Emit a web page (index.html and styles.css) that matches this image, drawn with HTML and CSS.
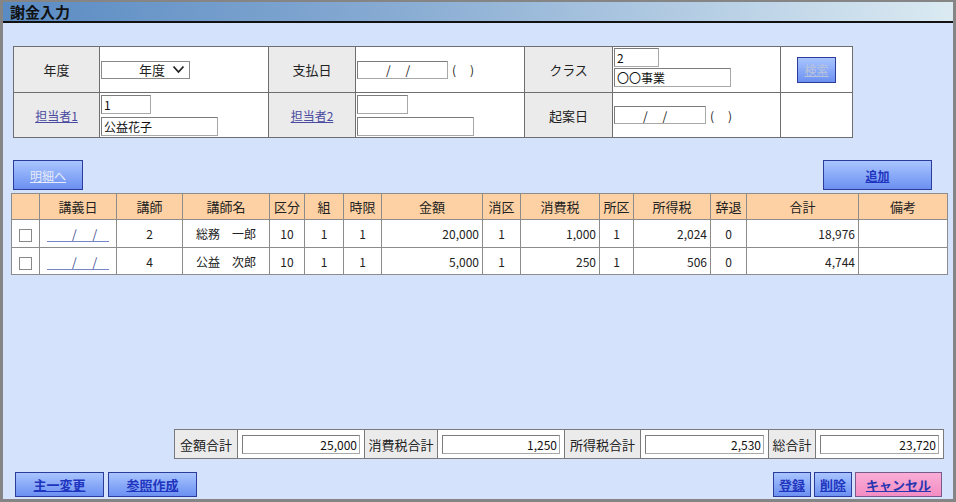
FILE: index.html
```html
<!DOCTYPE html>
<html lang="ja">
<head>
<meta charset="utf-8">
<title>謝金入力</title>
<link rel="stylesheet" href="styles.css">
</head>
<body>
<div class="window">
  <div class="titlebar">謝金入力</div>
  <div class="content">
    <table class="head">
      <colgroup><col class="c86"><col class="c169"><col class="c87"><col class="c169"><col class="c88"><col class="c168"><col class="c72"></colgroup>
      <tr class="r1">
        <td class="lbl">年度</td>
        <td class="val"><div class="select"><span>年度</span><svg width="13" height="9" viewBox="0 0 13 9"><path d="M1.5 1.5 L6.5 7 L11.5 1.5" fill="none" stroke="#222" stroke-width="1.8"/></svg></div></td>
        <td class="lbl">支払日</td>
        <td class="val"><div class="inline"><input class="in date" value="/　 /" readonly><span class="paren">(　)</span></div></td>
        <td class="lbl">クラス</td>
        <td class="val top"><div class="stack"><input class="in w45" value="2" readonly><input class="in w117" value="〇〇事業" readonly></div></td>
        <td class="center"><a class="btn btn-dim search">検索</a></td>
      </tr>
      <tr class="r2">
        <td class="lbl"><a class="link">担当者1</a></td>
        <td class="val"><div class="stack gap"><input class="in w50" value="1" readonly><input class="in w117" value="公益花子" readonly></div></td>
        <td class="lbl"><a class="link">担当者2</a></td>
        <td class="val"><div class="stack gap"><input class="in w51" value="" readonly><input class="in w117" value="" readonly></div></td>
        <td class="lbl">起案日</td>
        <td class="val"><div class="inline"><input class="in date2" value="/　 /" readonly><span class="paren">(　)</span></div></td>
        <td></td>
      </tr>
    </table>

    <div class="toolbar">
      <a class="btn btn-dim detail">明細へ</a>
      <a class="btn add">追加</a>
    </div>

    <table class="grid">
      <colgroup>
        <col style="width:28px"><col style="width:77px"><col style="width:66px"><col style="width:87px"><col style="width:35px"><col style="width:39px"><col style="width:38px"><col style="width:101px"><col style="width:38px"><col style="width:79px"><col style="width:34px"><col style="width:77px"><col style="width:36px"><col style="width:112px"><col style="width:89px">
      </colgroup>
      <thead>
        <tr><th></th><th>講義日</th><th>講師</th><th>講師名</th><th>区分</th><th>組</th><th>時限</th><th>金額</th><th>消区</th><th>消費税</th><th>所区</th><th>所得税</th><th>辞退</th><th>合計</th><th>備考</th></tr>
      </thead>
      <tbody>
        <tr>
          <td class="c"><span class="check"></span></td>
          <td class="c"><span class="datelink">/ /</span></td>
          <td class="c">2</td><td class="c">総務　一郎</td><td class="c">10</td><td class="c">1</td><td class="c">1</td>
          <td class="r">20,000</td><td class="c">1</td><td class="r">1,000</td><td class="c">1</td><td class="r">2,024</td><td class="c">0</td><td class="r">18,976</td><td></td>
        </tr>
        <tr>
          <td class="c"><span class="check"></span></td>
          <td class="c"><span class="datelink">/ /</span></td>
          <td class="c">4</td><td class="c">公益　次郎</td><td class="c">10</td><td class="c">1</td><td class="c">1</td>
          <td class="r">5,000</td><td class="c">1</td><td class="r">250</td><td class="c">1</td><td class="r">506</td><td class="c">0</td><td class="r">4,744</td><td></td>
        </tr>
      </tbody>
    </table>

    <table class="totals">
      <colgroup><col style="width:63px"><col style="width:127px"><col style="width:73px"><col style="width:127px"><col style="width:76px"><col style="width:128px"><col style="width:47px"><col style="width:128px"></colgroup>
      <tr>
        <td class="lbl">金額合計</td><td class="tv"><input class="in tin" value="25,000" readonly></td>
        <td class="lbl">消費税合計</td><td class="tv"><input class="in tin" value="1,250" readonly></td>
        <td class="lbl">所得税合計</td><td class="tv"><input class="in tin" value="2,530" readonly></td>
        <td class="lbl">総合計</td><td class="tv"><input class="in tin" value="23,720" readonly></td>
      </tr>
    </table>

    <div class="footer">
      <div class="group">
        <a class="btn fbtn w89">主一変更</a>
        <a class="btn fbtn w89">参照作成</a>
      </div>
      <div class="group">
        <a class="btn fbtn w38">登録</a>
        <a class="btn fbtn w38">削除</a>
        <a class="btn fbtn cancel">キャンセル</a>
      </div>
    </div>
  </div>
</div>
</body>
</html>
```

FILE: styles.css
```css
* { box-sizing: border-box; }
html, body { margin: 0; padding: 0; }
body {
  width: 956px;
  height: 502px;
  overflow: hidden;
  font-family: "Noto Sans CJK JP", "Liberation Sans", sans-serif;
  font-size: 12px;
  color: #222;
  background: #d4e3fb;
}
.window {
  width: 956px;
  height: 502px;
  border: 3px solid #858585;
  border-top-width: 2px;
  display: flex;
  flex-direction: column;
  background: #d4e3fb;
}
.titlebar {
  height: 21px;
  flex: none;
  background: linear-gradient(to right, #5a8bc3 0%, #86aad2 40%, #dbeaf2 100%);
  border-bottom: 2px solid #111;
  font-size: 15px;
  font-weight: bold;
  line-height: 19px;
  padding-left: 7px;
  color: #111;
}
.content {
  flex: 1;
  display: flex;
  flex-direction: column;
  padding: 23px 0 2px 10px;
}

/* header form table */
.head {
  border-collapse: collapse;
  table-layout: fixed;
  width: 839px;
  background: #fff;
}
.c86 { width: 86px; } .c169 { width: 169px; } .c87 { width: 87px; }
.c88 { width: 88px; } .c168 { width: 168px; } .c72 { width: 72px; }
.head td {
  border: 1px solid #6e6e6e;
  padding: 0;
  vertical-align: middle;
}
.head .r1 td { height: 46px; }
.head .r2 td { height: 45px; }
.head .lbl {
  background: #ebebeb;
  text-align: center;
  font-size: 13px;
}
.head .val { padding-left: 1px; }
.head .top { vertical-align: top; padding-top: 1px; }
.head .center { text-align: center; }
.link {
  color: #4a4aa0;
  text-decoration: underline;
  font-size: 12px;
}
.stack { display: flex; flex-direction: column; gap: 1px; align-items: flex-start; }
.stack.gap { gap: 3px; }
.inline { display: flex; align-items: center; }
.paren { margin-left: 4px; font-size: 12px; letter-spacing: 1px; }

.in {
  display: block;
  height: 19px;
  border: 1px solid #a8a8a8;
  border-top-color: #7c7c7c;
  border-left-color: #7c7c7c;
  background: #fff;
  font-family: "Noto Sans CJK JP", "Liberation Sans", sans-serif;
  font-size: 12px;
  color: #111;
  padding: 0 2px;
  margin: 0;
  outline: none;
  white-space: pre;
}
.w45 { width: 45px; }
.w50 { width: 50px; }
.w51 { width: 51px; }
.w117 { width: 117px; }
.date { width: 91px; height: 18px; padding-left: 28px; }
.date2 { width: 92px; height: 18px; padding-left: 28px; }

.select {
  width: 89px;
  height: 18px;
  border: 1px solid #8a8a8a;
  background: #fff;
  display: flex;
  align-items: center;
  justify-content: flex-end;
  gap: 7px;
  padding-right: 4px;
  font-size: 13px;
}

/* buttons */
.btn {
  display: inline-flex;
  align-items: center;
  justify-content: center;
  background: linear-gradient(#a9c5ff, #6b90f1);
  border: 1px solid #2c3c9a;
  color: #1f35c0;
  font-weight: bold;
  text-decoration: underline;
  font-size: 12px;
  cursor: pointer;
}
.btn-dim { color: #b9c3dc; font-weight: normal; }
.search { width: 39px; height: 26px; font-size: 12px; }

.toolbar {
  display: flex;
  justify-content: space-between;
  width: 919px;
  margin-top: 22px;
  height: 30px;
}
.detail { width: 70px; height: 30px; color: #e8ecf8; }
.add { width: 109px; height: 30px; }

/* detail grid */
.grid {
  margin-top: 3px;
  margin-left: -2px;
  border-collapse: collapse;
  table-layout: fixed;
  width: 936px;
  background: #fff;
}
.grid th, .grid td {
  border: 1px solid #8c8c8c;
  padding: 0 3px;
}
.grid th {
  background: #fdd1a3;
  height: 26px;
  font-weight: normal;
  font-size: 13px;
  text-align: center;
}
.grid td { height: 28px; font-size: 12px; }
.grid tbody tr:last-child td { height: 27px; }
.grid .c { text-align: center; }
.grid .r { text-align: right; }
.check {
  display: inline-block;
  width: 13px;
  height: 13px;
  border: 1px solid #888;
  background: #fff;
  vertical-align: middle;
}
.datelink {
  display: inline-block;
  width: 62px;
  border-bottom: 1px solid #7585c8;
  color: #3c4a8c;
  text-align: left;
  padding-left: 25px;
  word-spacing: 13px;
  line-height: 15px;
}

/* totals */
.totals {
  margin-top: auto;
  margin-left: 161px;
  border-collapse: collapse;
  table-layout: fixed;
  width: 769px;
  background: #fff;
}
.totals td {
  border: 1px solid #7a7a7a;
  height: 29px;
  padding: 0;
}
.totals .lbl {
  background: #ebebeb;
  text-align: center;
  font-size: 13px;
}
.totals .tv { padding: 0 4px; }
.tin { width: 100%; height: 19px; text-align: right; }

/* footer */
.footer {
  display: flex;
  justify-content: space-between;
  margin-top: 13px;
  padding-left: 2px;
  width: 929px;
  height: 25px;
}
.group { display: flex; gap: 4px; }
.group + .group { gap: 3px; }
.fbtn { height: 25px; font-size: 13px; }
.w89 { width: 89px; }
.w38 { width: 38px; }
.cancel {
  width: 87px;
  background: linear-gradient(#f9aed6, #f48cc3);
  border-color: #7a5a8a;
  color: #2a35b0;
}
```
